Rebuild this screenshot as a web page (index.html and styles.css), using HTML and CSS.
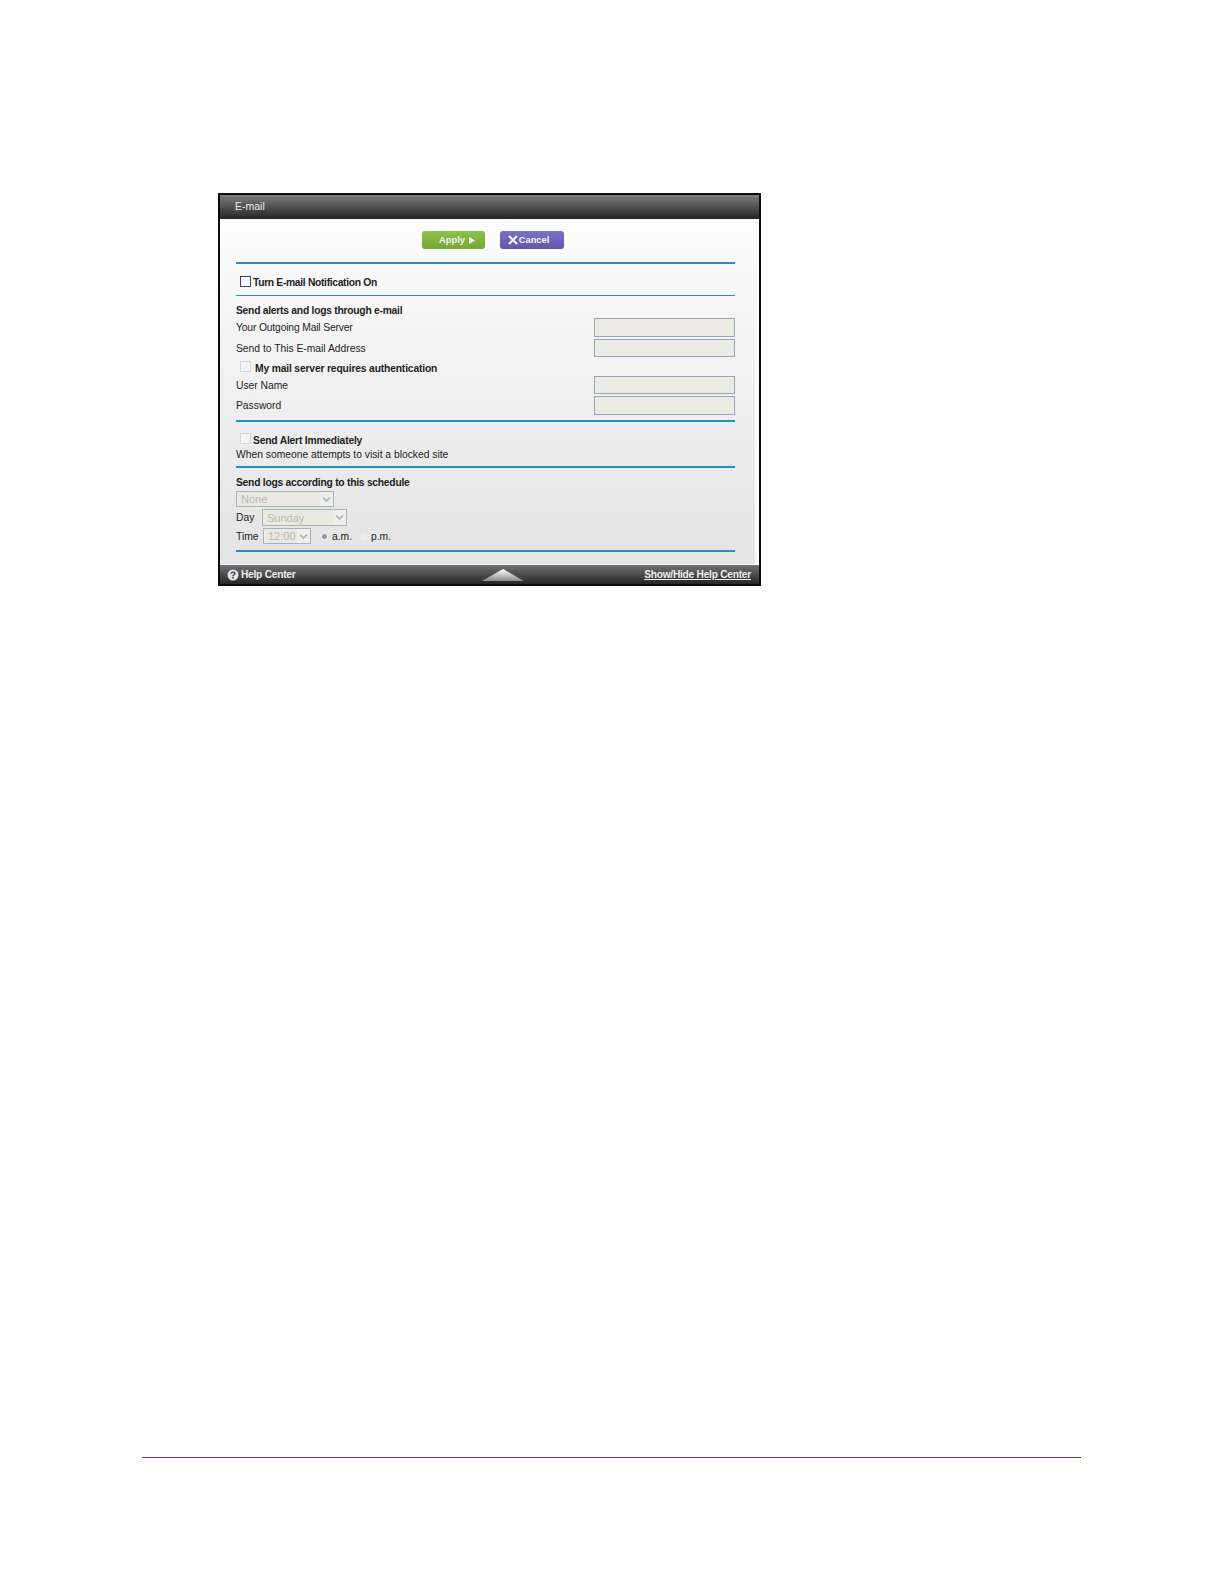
FILE: index.html
```html
<!DOCTYPE html>
<html lang="en">

<head>
  <meta charset="UTF-8">
  <title>E-mail</title>
  <link rel="stylesheet" href="styles.css">
</head>

<body>
  <div class="page">
    <div class="window">
      <div class="title-bar">E-mail</div>

      <div class="content">
        <div class="buttons">
          <div class="btn btn-apply">Apply
            <svg class="apply-arrow" width="6" height="7" viewBox="0 0 6 7"><path d="M0 0L6 3.5L0 7Z" fill="#fff" /></svg>
          </div>
          <div class="btn btn-cancel">
            <svg class="cancel-x" width="10" height="10" viewBox="0 0 10 10"><path d="M1 1L9 9M9 1L1 9" stroke="#fff" stroke-width="2" fill="none" /></svg>Cancel
          </div>
        </div>

        <hr class="rule rule-first">
        <div class="check-row turn-on">
          <span class="check check-dark"></span>
          <b>Turn E-mail Notification On</b>
        </div>
        <hr class="rule rule-thin">

        <div class="heading">Send alerts and logs through e-mail</div>
        <div class="field field-tall first-field">
          <span>Your Outgoing Mail Server</span>
          <span class="input"></span>
        </div>
        <div class="field">
          <span>Send to This E-mail Address</span>
          <span class="input"></span>
        </div>
        <div class="check-row auth">
          <span class="check"></span>
          <b>My mail server requires authentication</b>
        </div>
        <div class="field user-field">
          <span>User Name</span>
          <span class="input"></span>
        </div>
        <div class="field field-tall">
          <span>Password</span>
          <span class="input"></span>
        </div>
        <hr class="rule rule-alert">

        <div class="check-row alert">
          <span class="check"></span>
          <b>Send Alert Immediately</b>
        </div>
        <div class="note">When someone attempts to visit a blocked site</div>
        <hr class="rule rule-note">

        <div class="heading schedule">Send logs according to this schedule</div>
        <div class="select select-none">None<span class="caret-box"><svg width="9" height="5" viewBox="0 0 9 5"><path d="M1 0.5L4.5 4L8 0.5" stroke="#a9b4c0" stroke-width="1.6" fill="none" /></svg></span></div>
        <div class="inline-row day-row">
          <span class="inline-label">Day</span>
          <div class="select select-day">Sunday<span class="caret-box"><svg width="9" height="5" viewBox="0 0 9 5"><path d="M1 0.5L4.5 4L8 0.5" stroke="#a9b4c0" stroke-width="1.6" fill="none" /></svg></span></div>
        </div>
        <div class="inline-row time-row">
          <span class="inline-label">Time</span>
          <div class="select select-time">12:00<span class="caret-box"><svg width="9" height="5" viewBox="0 0 9 5"><path d="M1 0.5L4.5 4L8 0.5" stroke="#a9b4c0" stroke-width="1.6" fill="none" /></svg></span></div>
          <span class="radio radio-on"></span><span class="radio-label">a.m.</span>
          <span class="radio radio-pm"></span><span class="radio-label">p.m.</span>
        </div>
        <hr class="rule rule-last">
      </div>

      <div class="help-bar">
        <div class="help-left">
          <svg width="12" height="12" viewBox="0 0 12 12"><circle cx="6" cy="6" r="5.5" fill="#dfe3ea" /><path d="M4.2 4.6C4.3 2.7 7.8 2.7 7.8 4.5C7.8 5.8 6 5.7 6 7.2" stroke="#4a4f5a" stroke-width="1.5" fill="none" /><rect x="5.2" y="8" width="1.6" height="1.6" fill="#4a4f5a" /></svg>
          Help Center
        </div>
        <svg class="help-tab" width="42" height="13" viewBox="0 0 42 13"><defs><linearGradient id="tab" x1="0" y1="0" x2="0" y2="1"><stop offset="0" stop-color="#ffffff" /><stop offset="1" stop-color="#8a8a8a" /></linearGradient></defs><path d="M0 12L21 0L42 12Z" fill="url(#tab)" /></svg>
        <div class="help-right">Show/Hide Help Center</div>
      </div>
    </div>
  </div>

  <div class="footer-line"></div>
</body>

</html>
```

FILE: styles.css
```css
* {
  box-sizing: border-box;
}

html, body {
  height: 100%;
}

body {
  margin: 0;
  background: #fff;
  font-family: "Liberation Sans", Arial, sans-serif;
  font-size: 10.3px;
  color: #222;
  display: flex;
  flex-direction: column;
}

b {
  font-size: 10.3px;
  letter-spacing: -0.2px;
}

.page {
  padding: 193px 0 0 218px;
  flex: 1;
}

.window {
  width: 543px;
  height: 393px;
  border: 2px solid #0c0c0c;
  display: flex;
  flex-direction: column;
  background: linear-gradient(#ffffff 0%, #f4f4f4 35%, #e2e2e2 100%);
}

.title-bar {
  height: 24px;
  line-height: 23px;
  font-size: 10.5px;
  padding-left: 15px;
  color: #eee;
  background: linear-gradient(#7c7c7c, #262626);
  flex: none;
}

.content {
  flex: 1;
  padding: 0 20px 0 16px;
  border-right: 4px solid #fafafa;
}

.buttons {
  display: flex;
  gap: 15px;
  padding: 12px 0 0 186px;
}

.btn {
  height: 18px;
  border-radius: 3px;
  color: #f4f4f4;
  font-weight: bold;
  font-size: 9.3px;
  display: flex;
  align-items: center;
  justify-content: center;
}

.btn-apply {
  width: 63px;
  padding-left: 7px;
  background: linear-gradient(#8fc04e, #74a82e);
}

.apply-arrow {
  margin-left: 4px;
}

.btn-cancel {
  width: 64px;
  padding-right: 7px;
  background: linear-gradient(#7d73c6, #6257ab);
}

.cancel-x {
  margin-right: 1px;
}

.rule {
  border: 0;
  height: 2px;
  background: #1c92bd;
  margin: 0;
}

.rule-first {
  margin-top: 13px;
}

.rule-thin {
  height: 1px;
  background: #1f95bd;
  margin-top: 5px;
}

.rule-alert {
  margin-top: 5px;
}

.rule-note {
  margin-top: 5px;
}

.rule-last {
  margin-top: 6px;
}

.check-row {
  display: flex;
  align-items: center;
  height: 16px;
  padding-left: 4px;
}

.check {
  width: 11px;
  height: 11px;
  border: 1px solid #d6d6d6;
  background: #f4f4f4;
  margin: 0 2px 3px 0;
  flex: none;
}

.check-dark {
  border-color: #35475e;
  background: #f6f8fa;
  margin-bottom: 1px;
}

.turn-on {
  margin-top: 10px;
}

.turn-on b {
  letter-spacing: -0.32px;
}

.auth {
  margin-top: 3px;
}

.auth b {
  letter-spacing: -0.16px;
}

.auth .check {
  margin-right: 4px;
}

.alert {
  margin-top: 10px;
}

.heading {
  font-weight: bold;
  letter-spacing: -0.25px;
  margin-top: 8px;
  line-height: 13px;
}

.field {
  display: flex;
  justify-content: space-between;
  align-items: center;
  height: 18px;
  margin-top: 2px;
}

.field-tall {
  height: 19px;
}

.first-field {
  margin-top: 1px;
}

.first-field span:first-child {
  letter-spacing: -0.15px;
}

.user-field {
  margin-top: 0;
}

.input {
  width: 141px;
  height: 100%;
  border: 1px solid #94a6b8;
  background: #ecebe3;
}

.note {
  line-height: 13px;
}

.select {
  height: 16px;
  border: 1px solid #a4b4c6;
  background: #e9e9e0;
  color: #b9b9b0;
  font-size: 11px;
  padding-left: 4px;
  display: flex;
  justify-content: space-between;
  align-items: center;
}

.select-none {
  width: 98px;
  margin-top: 2px;
}

.select-day {
  width: 85px;
  height: 17px;
}

.select-time {
  width: 48px;
}

.caret-box {
  width: 13px;
  height: 100%;
  background: #efefe8;
  display: flex;
  align-items: center;
  justify-content: center;
}

.inline-row {
  display: flex;
  align-items: center;
  margin-top: 2px;
}

.inline-label {
  width: 26px;
}

.time-row .inline-label {
  width: 27px;
}

.radio {
  width: 11px;
  height: 11px;
  border-radius: 50%;
  background: #e9ebee;
  border: 1px solid #dfe1e4;
  margin: 0 2px 0 8px;
  flex: none;
}

.radio-on {
  background: radial-gradient(#9a9a9a 0 2px, #e9ebee 3px);
}

.radio-pm {
  margin-left: 6px;
}

.help-bar {
  height: 20px;
  flex: none;
  border-top: 1px solid #fff;
  background: linear-gradient(#727272, #262626);
  color: #eee;
  font-weight: bold;
  font-size: 10.2px;
  letter-spacing: -0.25px;
  display: flex;
  align-items: center;
  justify-content: space-between;
  padding: 0 8px 0 7px;
  position: relative;
}

.help-left {
  display: flex;
  align-items: center;
  gap: 2px;
}

.help-right {
  text-decoration: underline;
}

.help-tab {
  position: absolute;
  left: 262px;
  bottom: 2px;
}

.footer-line {
  height: 1px;
  background: #5e3371;
  margin: 0 143px 126px 142px;
  flex: none;
}
```
